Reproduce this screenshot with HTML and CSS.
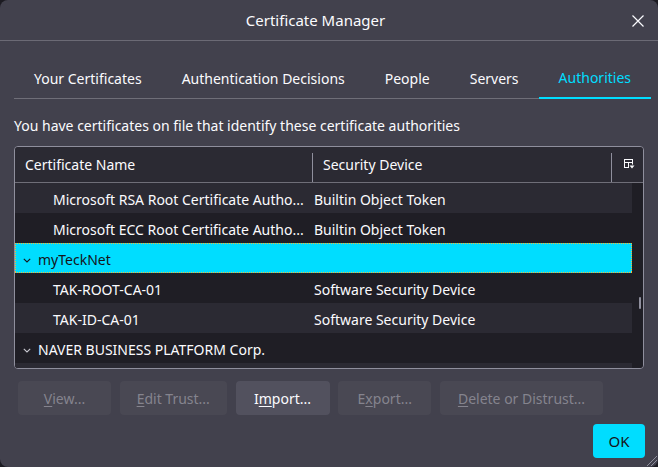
FILE: index.html
```html
<!DOCTYPE html>
<html lang="en">
<head>
<meta charset="utf-8">
<title>Certificate Manager</title>
<link rel="stylesheet" href="styles.css">
</head>
<body>
<div class="dialog">
  <header class="titlebar">
    <h1 class="title">Certificate Manager</h1>
    <button class="close" aria-label="Close">
      <svg width="12" height="12" viewBox="0 0 12 12"><path d="M0.5 0.5 L11.5 11.5 M11.5 0.5 L0.5 11.5" stroke="#fbfbfe" stroke-width="1.2" fill="none"/></svg>
    </button>
  </header>
  <main class="content">
    <nav class="tabs">
      <div class="tab">Your Certificates</div>
      <div class="tab">Authentication Decisions</div>
      <div class="tab">People</div>
      <div class="tab">Servers</div>
      <div class="tab tab-active">Authorities</div>
    </nav>
    <p class="desc">You have certificates on file that identify these certificate authorities</p>
    <div class="tree">
      <div class="tree-head">
        <div class="head-cell head-name">Certificate Name</div>
        <div class="splitter"></div>
        <div class="head-cell head-device">Security Device</div>
        <div class="splitter"></div>
        <div class="picker">
          <svg width="11" height="11" viewBox="0 0 11 11">
            <rect x="0.5" y="0.5" width="8" height="8" fill="none" stroke="#fbfbfe" stroke-width="1"/>
            <path d="M0.5 3.5 H8.5 M4.5 3.5 V8.5" stroke="#fbfbfe" stroke-width="1" fill="none"/>
            <rect x="5" y="5.5" width="6" height="5" fill="#2b2a33"/>
            <path d="M5.5 6.5 H10.5 L8 9.5 Z" fill="#fbfbfe"/>
          </svg>
        </div>
      </div>
      <div class="tree-body">
        <div class="rows">
          <div class="row"><div class="cell cell-name child">Microsoft RSA Root Certificate Autho...</div><div class="cell cell-device">Builtin Object Token</div></div>
          <div class="row"><div class="cell cell-name child">Microsoft ECC Root Certificate Autho...</div><div class="cell cell-device">Builtin Object Token</div></div>
          <div class="row row-selected"><div class="cell cell-name parent"><svg class="twisty" width="8" height="5" viewBox="0 0 8 5"><path d="M0.8 0.8 L4 4 L7.2 0.8" stroke="currentColor" stroke-width="1.1" fill="none"/></svg>myTeckNet</div><div class="cell cell-device"></div></div>
          <div class="row"><div class="cell cell-name child">TAK-ROOT-CA-01</div><div class="cell cell-device">Software Security Device</div></div>
          <div class="row"><div class="cell cell-name child">TAK-ID-CA-01</div><div class="cell cell-device">Software Security Device</div></div>
          <div class="row"><div class="cell cell-name parent"><svg class="twisty" width="8" height="5" viewBox="0 0 8 5"><path d="M0.8 0.8 L4 4 L7.2 0.8" stroke="currentColor" stroke-width="1.1" fill="none"/></svg>NAVER BUSINESS PLATFORM Corp.</div><div class="cell cell-device"></div></div>
          <div class="row"></div>
        </div>
        <div class="scrollbar"><div class="thumb"></div></div>
      </div>
    </div>
    <div class="actions">
      <button class="btn btn-view" disabled><u>V</u>iew...</button>
      <button class="btn btn-edit" disabled><u>E</u>dit Trust...</button>
      <button class="btn btn-import">I<u>m</u>port...</button>
      <button class="btn btn-export" disabled>E<u>x</u>port...</button>
      <button class="btn btn-delete" disabled><u>D</u>elete or Distrust...</button>
    </div>
    <div class="footer">
      <button class="ok">OK</button>
    </div>
  </main>
  <div class="grip"></div>
</div>
</body>
</html>
```

FILE: styles.css
```css
* { box-sizing: border-box; }
html, body { margin: 0; padding: 0; }
body {
  background: #1c1b22;
  font-family: "Noto Sans", "Open Sans", sans-serif;
  font-size: 14px;
  color: #fbfbfe;
}
.dialog {
  position: relative;
  width: 658px;
  height: 467px;
  background: #42414d;
  border-radius: 8px;
  overflow: hidden;
  display: flex;
  flex-direction: column;
}
.titlebar {
  height: 41px;
  border-bottom: 1px solid #6b6a75;
  display: flex;
  align-items: center;
}
.title {
  flex: 1;
  margin: 0;
  text-align: center;
  font-size: 15px;
  font-weight: normal;
  line-height: 20px;
}
.close {
  width: 14px;
  height: 14px;
  margin: 2px 13px 0 0;
  padding: 1px;
  border: 0;
  background: none;
  display: flex;
  align-items: center;
  justify-content: center;
}
.content {
  flex: 1;
  display: flex;
  flex-direction: column;
}
.tabs {
  display: flex;
  margin: 17px 0 0 14px;
}
.tab {
  height: 41px;
  padding: 1px 20px 0;
  display: flex;
  align-items: center;
  border-bottom: 1px solid #6f6e78;
  white-space: nowrap;
  font-size: 14px;
}
.tab-active {
  color: #00ddff;
  padding-top: 0;
  border-bottom: 2px solid #00ddff;
}
.desc {
  margin: 17px 14px 0;
  line-height: 20px;
}
.tree {
  margin: 10px 14px 0;
  border: 1px solid #8f8f9d;
  border-radius: 4px;
  overflow: hidden;
}
.tree-head {
  display: flex;
  height: 36px;
  background: #2b2a33;
  border-bottom: 1px solid #6f6e78;
}
.head-cell {
  display: flex;
  align-items: center;
  padding-left: 10px;
  white-space: nowrap;
}
.head-name { width: 297px; }
.head-device { width: 298px; }
.splitter {
  width: 1px;
  margin-top: 6px;
  background: #8f8f9d;
}
.picker {
  flex: 1;
  display: flex;
  align-items: center;
  padding-left: 12px;
}
.picker svg { display: block; }
.tree-body {
  display: flex;
  height: 185px;
  background: #1f1e25;
  overflow: hidden;
}
.rows {
  flex: 1;
}
.row {
  position: relative;
  display: flex;
  height: 30px;
  align-items: flex-start;
  white-space: nowrap;
}
.row:nth-child(odd) { background: #2b2a33; }
.row.row-selected {
  background: #00ddff;
  color: #15141a;
}
.row.row-selected::after {
  content: "";
  position: absolute;
  inset: 0;
  pointer-events: none;
  background:
    repeating-linear-gradient(90deg, #f7b733 0 1px, transparent 1px 2px) top left / 100% 1px no-repeat,
    repeating-linear-gradient(90deg, #f7b733 0 1px, transparent 1px 2px) bottom left / 100% 1px no-repeat,
    repeating-linear-gradient(180deg, #f7b733 0 1px, transparent 1px 2px) top left / 1px 100% no-repeat,
    repeating-linear-gradient(180deg, #f7b733 0 1px, transparent 1px 2px) top right / 1px 100% no-repeat;
}
.cell {
  overflow: hidden;
  height: 30px;
  padding-top: 4px;
  line-height: 26px;
}
.cell-name { width: 297px; }
.cell-name.child { padding-left: 38px; }
.cell-name.parent {
  display: flex;
  align-items: center;
  padding-left: 8px;
}
.twisty {
  display: block;
  margin-right: 7px;
  color: #c8c8d0;
}
.row-selected .twisty { color: #15141a; }
.cell-device {
  flex: 1;
  padding-left: 2px;
}
.scrollbar {
  width: 11px;
}
.thumb {
  width: 2px;
  height: 12px;
  margin: 114px 0 0 7px;
  background: #8f8f9d;
  border-radius: 1px;
}
.actions {
  display: flex;
  gap: 8.75px;
  margin: 12px 0 0 18px;
}
.btn {
  height: 34px;
  border: 0;
  border-radius: 4px;
  padding: 0;
  font-family: inherit;
  font-size: 14px;
  background: #494853;
  color: #85848e;
}
.btn u { text-underline-offset: 2px; }
.btn-view { width: 93px; }
.btn-edit { width: 107px; }
.btn-import { width: 94px; background: #52515e; color: #fbfbfe; }
.btn-export { width: 93px; }
.btn-delete { width: 163px; }
.footer {
  display: flex;
  justify-content: flex-end;
  margin-top: 9px;
  padding-right: 13px;
}
.ok {
  width: 52px;
  height: 34px;
  border: 0;
  border-radius: 4px;
  background: #00ddff;
  color: #15141a;
  font-family: inherit;
  font-size: 15px;
}
.grip {
  position: absolute;
  right: 1px;
  bottom: 1px;
  width: 11px;
  height: 11px;
  background: repeating-linear-gradient(135deg, transparent 0 2px, #8f8f9d 2px 3px);
  clip-path: polygon(100% 0, 100% 100%, 0 100%);
}
```
